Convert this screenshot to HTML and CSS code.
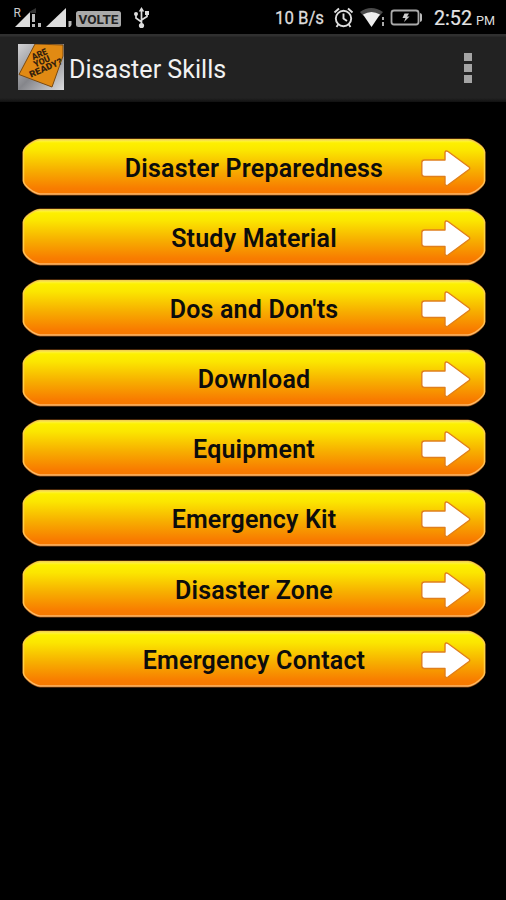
FILE: index.html
```
<!DOCTYPE html>
<html lang="en">
<head>
<meta charset="utf-8">
<title>Disaster Skills</title>
<link rel="stylesheet" href="styles.css">
</head>
<body>
<svg class="defs" aria-hidden="true">
  <defs>
    <linearGradient id="fill" x1="0" y1="0" x2="0" y2="1">
      <stop offset="0" stop-color="#fff45c"/>
      <stop offset=".06" stop-color="#fdf000"/>
      <stop offset=".2" stop-color="#fbe600"/>
      <stop offset=".55" stop-color="#f7b000"/>
      <stop offset=".9" stop-color="#f87c00"/>
      <stop offset="1" stop-color="#f67800"/>
    </linearGradient>
    <linearGradient id="edge" x1="0" y1="0" x2="0" y2="1">
      <stop offset="0" stop-color="#f3d24a"/>
      <stop offset=".5" stop-color="#ffd640"/>
      <stop offset="1" stop-color="#ffb566"/>
    </linearGradient>
    <linearGradient id="metal" x1="0" y1="0" x2="1" y2="1">
      <stop offset="0" stop-color="#d2d2d4"/>
      <stop offset=".5" stop-color="#85868b"/>
      <stop offset="1" stop-color="#dcdcde"/>
    </linearGradient>
  </defs>
  <symbol id="plate" viewBox="0 0 464 58">
    <path d="M18 .5H446C453 1 463 8 463.500 14V43C463 49 453 57 446 57.500H18C11 57 1 49 .5 43V14C1 8 11 1 18 .5Z" fill="#8d4a10"/>
    <path d="M18 1.700H446C452 2 462 9 462.500 14V43C462 48 452 55.500 446 56H18C12 55.500 2 48 1.500 43V14C2 9 12 2 18 1.700Z" fill="url(#fill)" stroke="url(#edge)" stroke-width="1.500"/>
  </symbol>
  <symbol id="arrow" viewBox="0 0 52 38">
    <path d="M4.500 11H25V3.500Q25.500 1 28 2.500L49 18Q50.500 19.200 49 20.500L28 36Q25.500 37.500 25 35V27.500H4.500Q1.800 27.500 1.800 25V13.500Q1.800 11 4.500 11Z" fill="#fff" stroke="#e07f1c" stroke-width="1.400" stroke-linejoin="round"/>
  </symbol>
</svg>

<div class="status">
  <svg class="status-left" viewBox="0 0 160 34">
    <text x="13.500" y="17" class="roaming">R</text>
    <path d="M15 27L30 12V27Z" fill="#ddd"/>
    <path d="M29 12L36 8V13H31Z" fill="#333"/>
    <path d="M32 14H35V22H32ZM32 24H35V27H32ZM38 23H41V27H38Z" fill="#bbb"/>
    <path d="M46 27L66 8V27Z" fill="#ddd"/>
    <path d="M68.500 21H71.500V25L70 27H68.500Z" fill="#bbb"/>
    <rect x="76" y="11" width="45" height="16" rx="2.500" fill="#aaa"/>
    <text x="78.500" y="23.500" class="volte" textLength="40" lengthAdjust="spacingAndGlyphs">VOLTE</text>
    <g fill="none" stroke="#ddd" stroke-width="1.700">
      <path d="M141.500 10V26M141.500 22L136 18V14M141.500 20L147 16.500V13"/>
    </g>
    <path d="M138.700 11.500L141.500 7L144.300 11.500ZM145 11H149V15H145Z" fill="#ddd"/>
    <circle cx="136" cy="14" r="2" fill="#ddd"/><circle cx="141.500" cy="25.500" r="2.600" fill="#ddd"/>
  </svg>
  <svg class="status-right" viewBox="265 0 241 34">
    <text x="275" y="24" class="speed" textLength="49" lengthAdjust="spacingAndGlyphs">10 B/s</text>
    <g fill="none" stroke="#ddd" stroke-width="1.900">
      <circle cx="343.500" cy="18.500" r="7.700"/>
      <path d="M343.500 13.500V18.500L347 21M334.500 12.500L339 8.500M348 8.500L352.500 12.500M338.500 24L336.500 27M348.500 24L350.500 27"/>
    </g>
    <path d="M360 12Q371 4 383 12L379.500 16Q371 11 363.500 16Z" fill="#4a4a4a"/>
    <path d="M363 14.500Q371.500 9.500 380 14.500L371.500 27Z" fill="#eee"/>
    <path d="M382 17H384V20H382ZM382 22H384V26H382Z" fill="#aaa"/>
    <rect x="391.500" y="10.500" width="27" height="14" rx="2.500" fill="none" stroke="#aaa" stroke-width="1.800"/>
    <path d="M420 13Q422 13.500 422 15V20Q422 21.500 420 22Z" fill="#bbb"/>
    <path d="M404.500 13.500H409L407 16.500H409.500L404 22L405.500 18H402.500Z" fill="#ccc"/>
    <text x="434" y="25" class="time" textLength="38" lengthAdjust="spacingAndGlyphs">2:52</text>
    <text x="476" y="25" class="pm" textLength="19" lengthAdjust="spacingAndGlyphs">PM</text>
  </svg>
</div>

<header class="bar">
  <svg class="logo" viewBox="0 0 46 46">
    <rect width="46" height="46" fill="url(#metal)"/>
    <path d="M17 0L45 1V12L34 43L1 30.500Z" fill="#e18a13" stroke="#7b4a10" stroke-width="1"/>
    <g class="sign" transform="rotate(-24 24 19)">
      <text x="17" y="13" textLength="16" lengthAdjust="spacingAndGlyphs">ARE</text>
      <text x="16" y="20.500" textLength="17" lengthAdjust="spacingAndGlyphs">YOU</text>
      <text x="8" y="28" textLength="35" lengthAdjust="spacingAndGlyphs">READY?</text>
    </g>
  </svg>
  <h1 class="title">Disaster Skills</h1>
  <div class="more"><i></i><i></i><i></i></div>
</header>

<main class="menu">
  <button class="item"><svg class="plate"><use href="#plate"/></svg><span>Disaster Preparedness</span><svg class="arrow"><use href="#arrow"/></svg></button>
  <button class="item"><svg class="plate"><use href="#plate"/></svg><span>Study Material</span><svg class="arrow"><use href="#arrow"/></svg></button>
  <button class="item"><svg class="plate"><use href="#plate"/></svg><span>Dos and Don'ts</span><svg class="arrow"><use href="#arrow"/></svg></button>
  <button class="item"><svg class="plate"><use href="#plate"/></svg><span>Download</span><svg class="arrow"><use href="#arrow"/></svg></button>
  <button class="item"><svg class="plate"><use href="#plate"/></svg><span>Equipment</span><svg class="arrow"><use href="#arrow"/></svg></button>
  <button class="item"><svg class="plate"><use href="#plate"/></svg><span>Emergency Kit</span><svg class="arrow"><use href="#arrow"/></svg></button>
  <button class="item"><svg class="plate"><use href="#plate"/></svg><span>Disaster Zone</span><svg class="arrow"><use href="#arrow"/></svg></button>
  <button class="item"><svg class="plate"><use href="#plate"/></svg><span>Emergency Contact</span><svg class="arrow"><use href="#arrow"/></svg></button>
</main>
</body>
</html>
```
FILE: styles.css
```
* { box-sizing: border-box; }
body {
  margin: 0;
  height: 900px;
  overflow: hidden;
  background: #000;
  font-family: Roboto, sans-serif;
}
.defs { position: absolute; width: 0; height: 0; }
.status {
  display: flex;
  justify-content: space-between;
  height: 34px;
}
.status-left { width: 160px; height: 34px; }
.status-right { width: 241px; height: 34px; }
.roaming { font-size: 12px; fill: #ccc; }
.volte { font-size: 13px; font-weight: 700; fill: #222; }
.speed { font-size: 17.5px; fill: #ddd; stroke: #ddd; stroke-width: .3px; }
.time { font-size: 20px; fill: #e4e4e4; stroke: #e4e4e4; stroke-width: .2px; }
.pm { font-size: 13.5px; fill: #ddd; }
.bar {
  display: flex;
  align-items: center;
  height: 68px;
  padding: 0 34px 0 18px;
  background: linear-gradient(#303030 0, #303030 2px, #222 3px, #222 64px, #111 100%);
}
.logo { width: 46px; height: 46px; margin: 0 5px 2px 0; }
.sign { font-size: 9px; font-weight: 900; fill: #34200d; }
.title {
  flex: 1;
  margin: 4px 0 0;
  font-size: 25.1px;
  line-height: 32px;
  font-weight: 400;
  color: #f2f2f2;
}
.more { display: grid; gap: 3px; }
.more i { width: 8px; height: 8px; background: #a4a4a4; }
.menu {
  display: grid;
  grid-auto-rows: 58px;
  gap: 12.3px;
  padding: 36px 20px 0 22px;
}
.item {
  display: grid;
  grid-template-columns: 398px 52px 14px;
  align-items: center;
  width: 464px;
  height: 58px;
  padding: 0;
  border: 0;
  background: none;
  font: 600 25px/30px Roboto, sans-serif;
  letter-spacing: .2px;
  color: #0c0c0c;
}
.plate { grid-area: 1 / 1 / 2 / 4; width: 464px; height: 58px; }
.item span { grid-area: 1 / 1 / 2 / 4; z-index: 1; padding-top: 4px; }
.arrow { grid-area: 1 / 2; z-index: 1; width: 52px; height: 38px; margin-top: 2px; }
```
